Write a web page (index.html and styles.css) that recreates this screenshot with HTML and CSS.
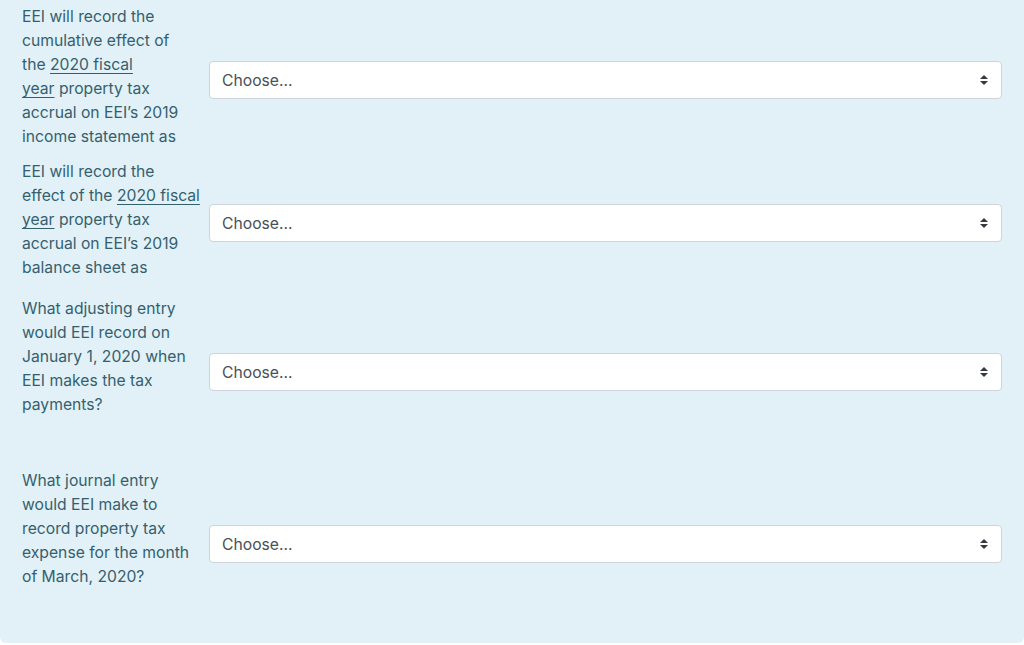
FILE: index.html
```html
<!DOCTYPE html>
<html>
<head>
<meta charset="utf-8">
<link rel="stylesheet" href="styles.css">
</head>
<body>
<div class="formulation">
  <div class="qrow">
    <div class="qlabel">EEI will record the<br>cumulative effect of<br>the <span class="term">2020 fiscal<br>year</span> property tax<br>accrual on EEI’s 2019<br>income statement as</div>
    <div class="select"><span>Choose...</span><svg class="arrows" width="8" height="10" viewBox="0 0 8 10"><path d="M4 0L8 4H0z M4 10L0 6H8z" fill="#343a40"/></svg></div>
  </div>
  <div class="qrow gap-a">
    <div class="qlabel">EEI will record the<br>effect of the <span class="term">2020 fiscal<br>year</span> property tax<br>accrual on EEI’s 2019<br>balance sheet as</div>
    <div class="select"><span>Choose...</span><svg class="arrows" width="8" height="10" viewBox="0 0 8 10"><path d="M4 0L8 4H0z M4 10L0 6H8z" fill="#343a40"/></svg></div>
  </div>
  <div class="qrow gap-b">
    <div class="qlabel trail">What adjusting entry<br>would EEI record on<br>January 1, 2020 when<br>EEI makes the tax<br>payments?</div>
    <div class="select"><span>Choose...</span><svg class="arrows" width="8" height="10" viewBox="0 0 8 10"><path d="M4 0L8 4H0z M4 10L0 6H8z" fill="#343a40"/></svg></div>
  </div>
  <div class="qrow gap-c">
    <div class="qlabel trail">What journal entry<br>would EEI make to<br>record property tax<br>expense for the month<br>of March, 2020?</div>
    <div class="select"><span>Choose...</span><svg class="arrows" width="8" height="10" viewBox="0 0 8 10"><path d="M4 0L8 4H0z M4 10L0 6H8z" fill="#343a40"/></svg></div>
  </div>
</div>
</body>
</html>
```

FILE: styles.css
```css
html, body {
  margin: 0;
  padding: 0;
  background: #ffffff;
}
body {
  font-family: Inter, "Noto Sans", "Liberation Sans", sans-serif;
  font-size: 15.7px;
  color: #34606e;
}
.formulation {
  background: #e2f1f7;
  height: 643px;
  box-sizing: border-box;
  padding: 5px 22px 0 22px;
  border-radius: 0 0 6px 6px;
}
.qrow {
  display: flex;
  align-items: center;
  gap: 7px;
}
.gap-a { margin-top: 11px; }
.gap-b { margin-top: 17px; }
.gap-c { margin-top: 28px; }
.qlabel {
  width: 180px;
  flex: none;
  line-height: 24px;
  white-space: nowrap;
}
.qlabel.trail {
  padding-bottom: 24px;
}
.term {
  text-decoration: underline;
  text-underline-offset: 3px;
}
.select {
  flex: 1;
  height: 38px;
  margin-top: 6px;
  box-sizing: border-box;
  background: #ffffff;
  border: 1px solid #ced4da;
  border-radius: 4px;
  display: flex;
  align-items: center;
  justify-content: space-between;
  padding: 0 13px 0 12px;
  color: #495057;
  font-size: 15.7px;
}
.arrows {
  display: block;
}
```
